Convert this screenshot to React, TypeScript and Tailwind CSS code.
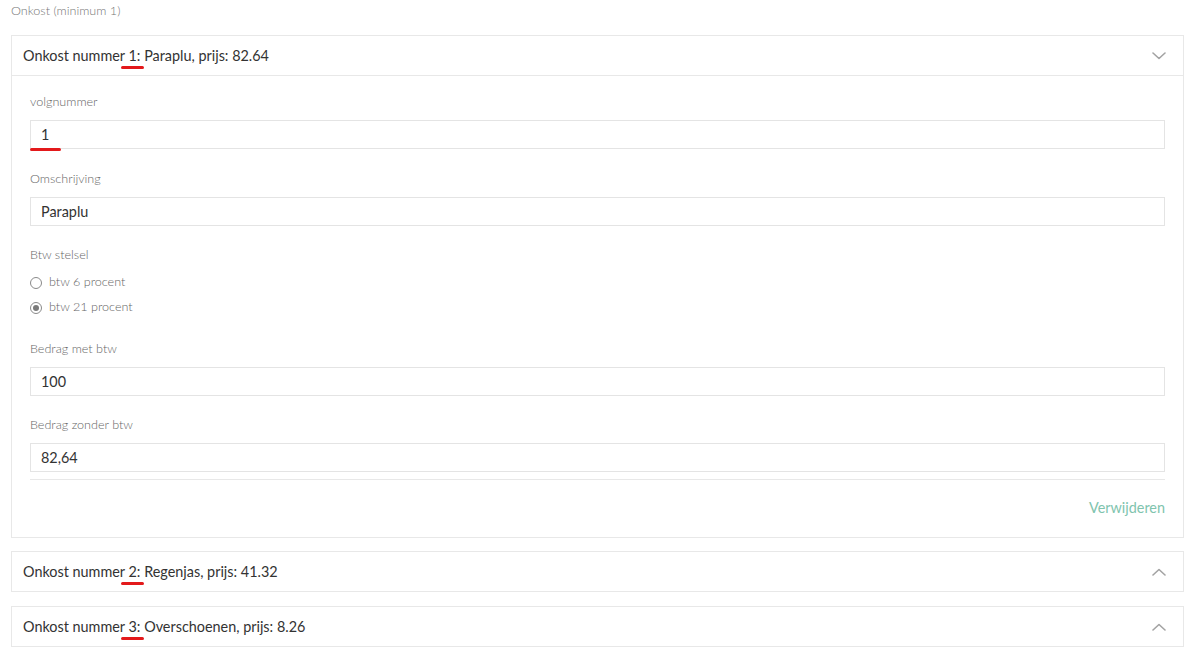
import React from "react";

type Item = { nr: number; name: string; price: string };

const items: Item[] = [
  { nr: 1, name: "Paraplu", price: "82.64" },
  { nr: 2, name: "Regenjas", price: "41.32" },
  { nr: 3, name: "Overschoenen", price: "8.26" },
];

function Chevron({ up }: { up?: boolean }) {
  return (
    <svg width="14" height="8" viewBox="0 0 14 8" fill="none" className="shrink-0">
      <path
        d={up ? "M1 7L7 1.5L13 7" : "M1 1L7 6.5L13 1"}
        stroke="#a3a3a3"
        strokeWidth="1.6"
        strokeLinecap="round"
        strokeLinejoin="round"
      />
    </svg>
  );
}

function Marked({ children }: { children: React.ReactNode }) {
  return (
    <span className="relative">
      {children}
      <span className="absolute left-[-7px] top-[19px] h-[3px] w-[23px] rounded-full bg-[#e3191b]" />
    </span>
  );
}

function Header({ item, open }: { item: Item; open?: boolean }) {
  return (
    <div className="flex h-[39px] items-center justify-between pl-[11px] pr-[17px]">
      <span className="text-[14.4px] text-[#333]">
        Onkost nummer <Marked>{item.nr}:</Marked> {item.name}, prijs: {item.price}
      </span>
      <Chevron up={!open} />
    </div>
  );
}

function Label({ children }: { children: React.ReactNode }) {
  return <div className="mb-[9px] h-[18px] text-[12.6px] font-light leading-[18px] text-[#666]">{children}</div>;
}

function Field({ label, value, mark, gap = "" }: { label: string; value: string; mark?: boolean; gap?: string }) {
  return (
    <div className={gap}>
      <Label>{label}</Label>
      <div className="relative flex h-[29px] items-center border border-[#e4e4e4] pl-[10px] text-[14.4px] text-[#333]">
        {value}
        {mark && <span className="absolute bottom-[-3px] left-[-1px] h-[3px] w-[31px] rounded-full bg-[#e3191b]" />}
      </div>
    </div>
  );
}

function Radio({ label, checked }: { label: string; checked?: boolean }) {
  return (
    <div className="flex h-[25px] items-center gap-[7px]">
      <span className="flex h-[12px] w-[12px] items-center justify-center rounded-full border border-[#8a8a8a] bg-white">
        {checked && <span className="h-[6px] w-[6px] rounded-full bg-[#7a7a7a]" />}
      </span>
      <span className="text-[12.6px] font-light text-[#666]">{label}</span>
    </div>
  );
}

export default function App() {
  return (
    <div className="min-h-screen bg-white pl-[11px] pr-[5px] pt-[3px] font-['Lato','Liberation_Sans',sans-serif]">
      <div className="h-[32px] text-[12.6px] font-light leading-[16px] text-[#777]">Onkost (minimum 1)</div>

      <div className="border border-[#e8e8e8]">
        <Header item={items[0]} open />
        <div className="border-t border-[#e8e8e8] px-[18px] pt-[17px] pb-[19px]">
          <Field label="volgnummer" value="1" mark />
          <Field label="Omschrijving" value="Paraplu" gap="mt-[21px]" />
          <div className="mt-[20px]">
            <Label>Btw stelsel</Label>
            <div className="-mt-[3px]">
              <Radio label="btw 6 procent" />
              <Radio label="btw 21 procent" checked />
            </div>
          </div>
          <Field label="Bedrag met btw" value="100" gap="mt-[20px]" />
          <Field label="Bedrag zonder btw" value="82,64" gap="mt-[20px]" />
          <div className="mt-[7px] border-t border-[#e8e8e8]" />
          <div className="mt-[18px] flex justify-end text-[14.4px] leading-[20px] text-[#80c4ae]">Verwijderen</div>
        </div>
      </div>

      <div className="mt-[13px] border border-[#e8e8e8]">
        <Header item={items[1]} />
      </div>
      <div className="mt-[14px] border border-[#e8e8e8]">
        <Header item={items[2]} />
      </div>
    </div>
  );
}
